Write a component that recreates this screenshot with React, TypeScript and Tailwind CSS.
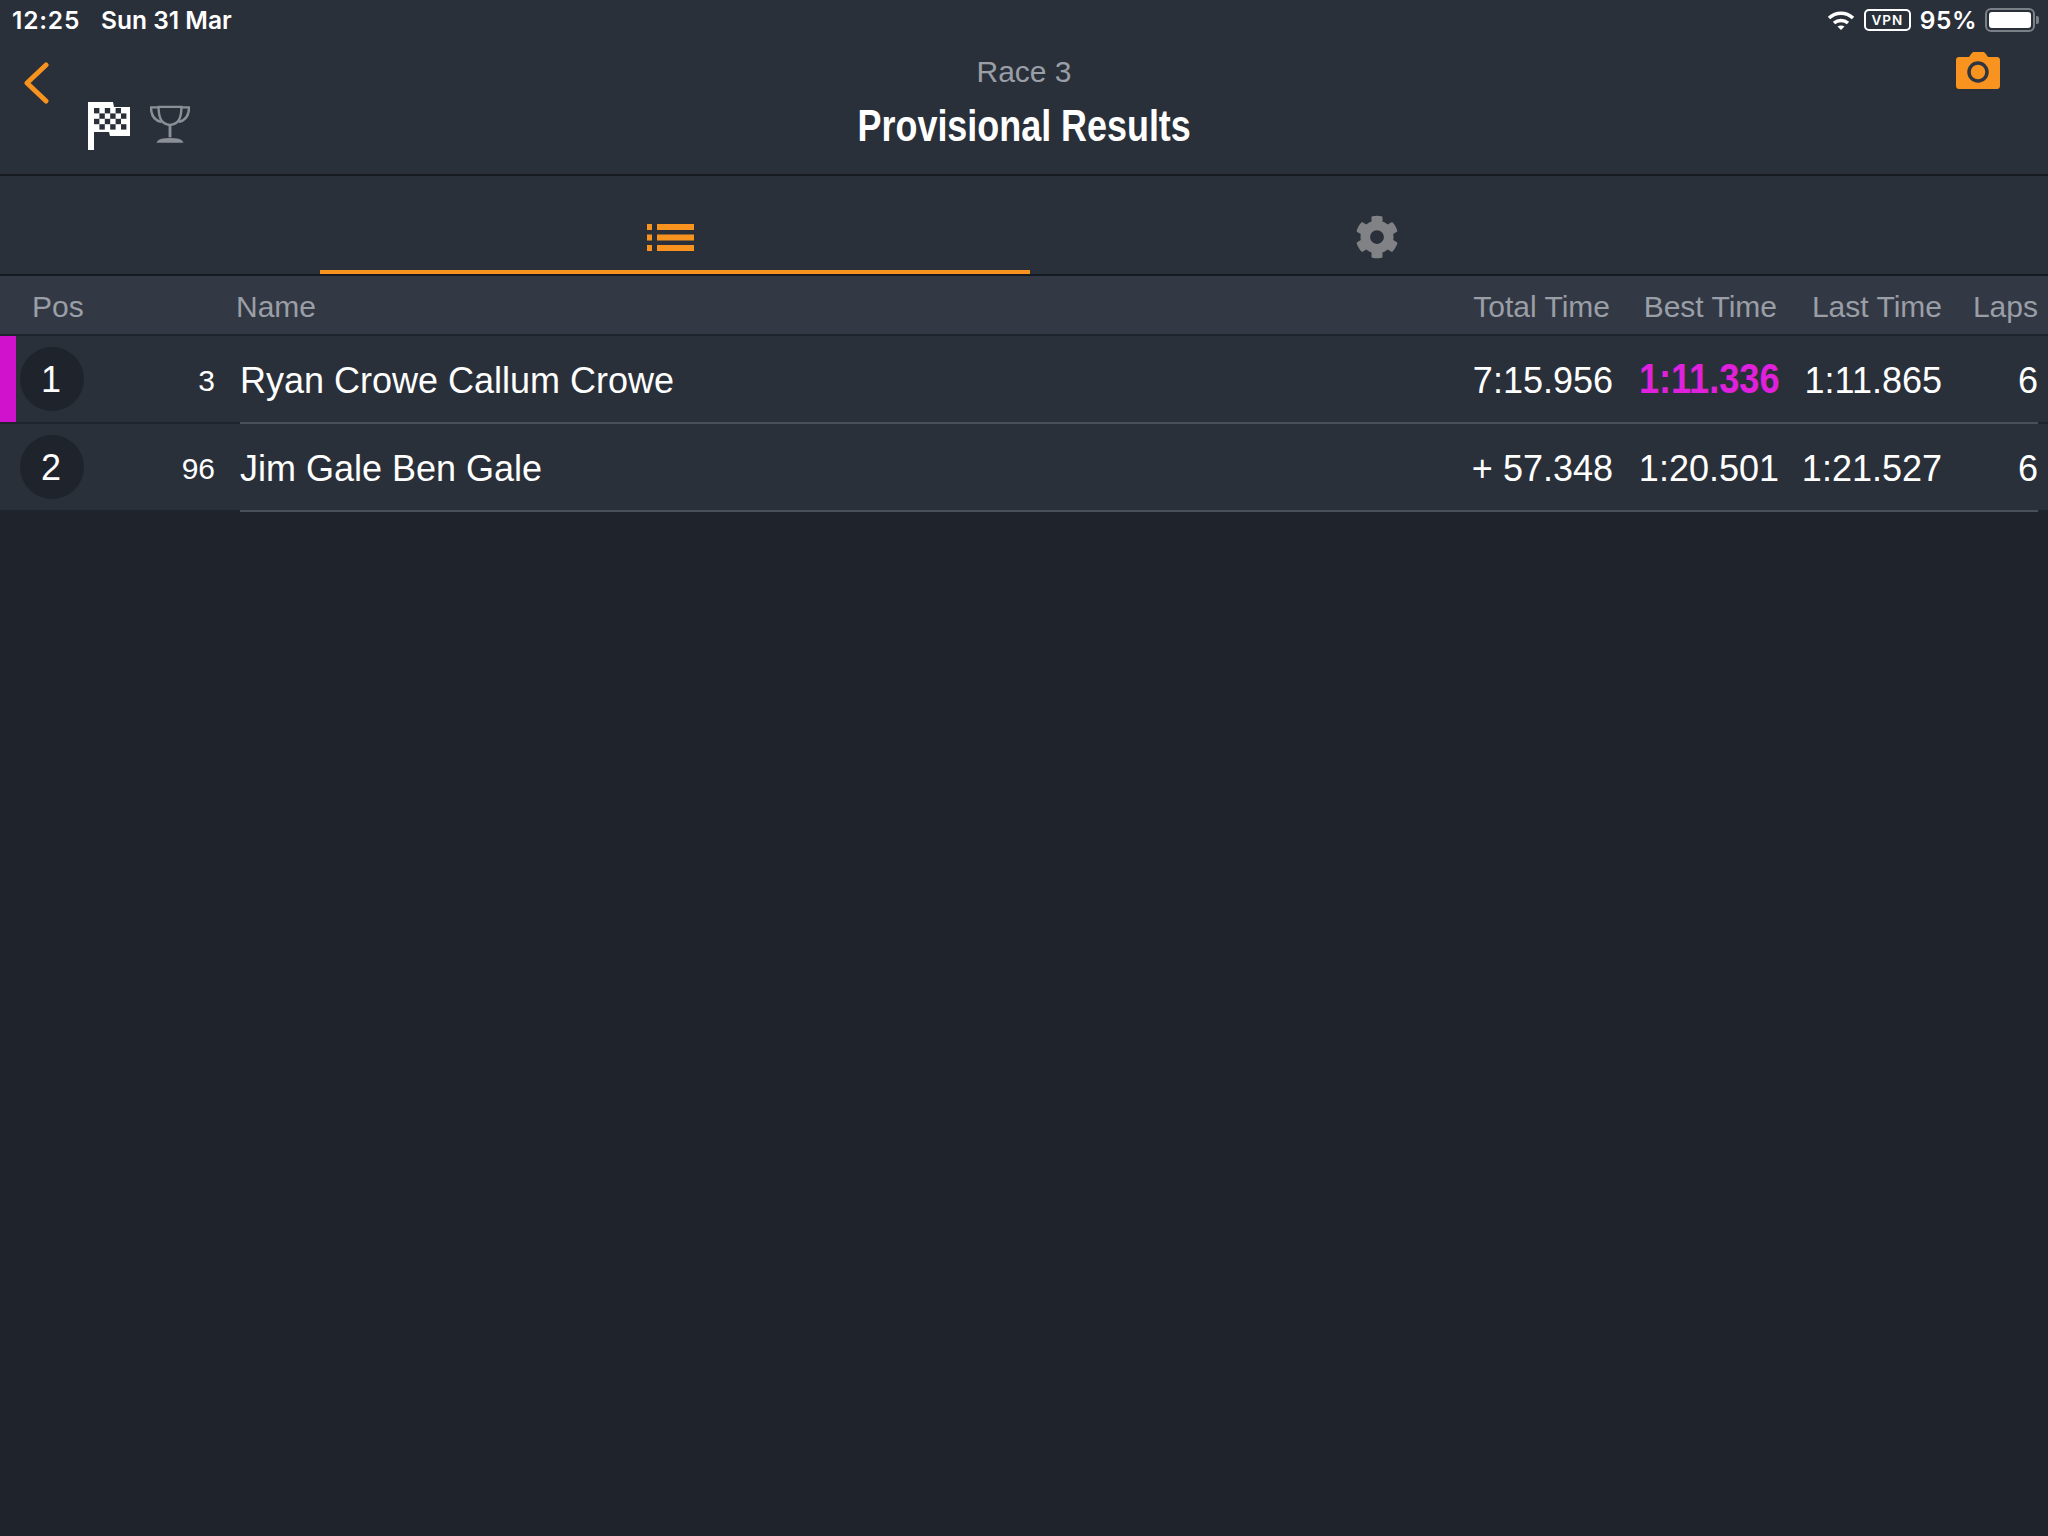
import { FaCog } from "react-icons/fa";

function Flag() {
  const cells: [number, number][] = [];
  for (let r = 0; r < 4; r++) for (let c = 0; c < 6; c++) if ((r + c) % 2 === 0) cells.push([c, r]);
  return (
    <svg width="44" height="48" viewBox="0 0 44 48" className="block">
      <path d="M0 0H25L26 5H42V34H22L21 30H6V48H0Z" fill="#ffffff" />
      {cells.map(([c, r]) => (
        <rect key={`${c}-${r}`} x={6 + c * 5.4} y={6 + r * 5.4} width="5.4" height="5.4" fill="#2a303a" />
      ))}
    </svg>
  );
}

function Trophy() {
  return (
    <svg width="40" height="40" viewBox="0 0 42 40" fill="none" stroke="#8b8f96" strokeWidth="2.500" className="block">
      <path d="M9 2H33C33 14 30 20 21 21C12 20 9 14 9 2Z" />
      <path d="M9 2.500H1C1 10 3 16 12 18" />
      <path d="M33 2.500H41C41 10 39 16 30 18" />
      <path d="M21 21V34" strokeWidth="3" />
      <path d="M9 38.500C11 35 31 35 33 38.500Z" fill="#8b8f96" />
    </svg>
  );
}

function Wifi() {
  return (
    <svg width="28" height="21" viewBox="0 0 28 21" fill="none" stroke="#ffffff" strokeWidth="3.500">
      <path d="M2 8C9 1.500 19 1.500 26 8" />
      <path d="M7 13C11 9.500 17 9.500 21 13" />
      <path d="M14 20L10.500 16.500C12.500 15 15.500 15 17.500 16.500Z" fill="#ffffff" stroke="none" />
    </svg>
  );
}

function Camera() {
  return (
    <svg width="44" height="37" viewBox="0 0 44 37" className="block">
      <path d="M3 5H13L15.500 1.500C16 .6 17 0 18 0H27C28 0 29 .6 29.500 1.500L32 5H41C42.700 5 44 6.300 44 8V34C44 35.700 42.700 37 41 37H3C1.300 37 0 35.700 0 34V8C0 6.300 1.300 5 3 5Z" fill="#f7931e" />
      <circle cx="22" cy="20" r="9" fill="none" stroke="#2f3540" strokeWidth="3.500" />
    </svg>
  );
}

function Battery() {
  return (
    <div className="flex items-center gap-[1px]">
      <div className="w-[50px] h-[24px] rounded-[6px] border-2 border-[#7b7f86] p-[2px]">
        <div className="w-full h-full rounded-[3px] bg-white" />
      </div>
      <div className="w-[3px] h-[8px] rounded-r-[2px] bg-[#7b7f86]" />
    </div>
  );
}

function Row({ pos, num, name, total, best, last, laps, fastest }: { pos: string; num: string; name: string; total: string; best: string; last: string; laps: string; fastest?: boolean }) {
  return (
    <div className="flex h-[88px] bg-[#2a303a] border-b-2 border-[#1f232c]">
      <div className={`w-[16px] shrink-0 ${fastest ? "bg-[#d012cd]" : ""}`} />
      <div className="w-[224px] shrink-0 flex items-center">
        <div className="w-[64px] h-[64px] ml-[4px] rounded-full bg-[#1f232c] flex items-center justify-center text-[36px] text-white pr-[2px] pt-[2px]">{pos}</div>
        <div className="flex-1 text-right text-[30px] text-white pr-[25px] pt-[2px]">{num}</div>
      </div>
      <div className="flex-1 mr-[10px] flex items-center border-b-2 -mb-[2px] border-[#4a4f58] text-[36px] text-white pt-[3px]">
        <div className="flex-1 whitespace-nowrap">{name}</div>
        <div className="w-[160px] text-right whitespace-nowrap pr-[1px]">{total}</div>
        <div className="w-[167px] text-right whitespace-nowrap pr-[2px]">
          {fastest ? (
            <span className="inline-block origin-right font-bold text-[#e020dc] text-[42px] leading-[40px] scale-x-[.86]">{best}</span>
          ) : (
            best
          )}
        </div>
        <div className="w-[161px] text-right whitespace-nowrap">{last}</div>
        <div className="w-[96px] text-right">{laps}</div>
      </div>
    </div>
  );
}

export default function App() {
  return (
    <div className="w-[2048px] h-[1536px] bg-[#1f232c] overflow-hidden font-['Liberation_Sans',sans-serif]">
      <div className="h-[176px] bg-[#2a303a] border-b-2 border-[#16191f] flex flex-col">
        <div className="h-[40px] flex items-center justify-between pl-[12px] pr-[9px] text-white font-['Inter',sans-serif] font-semibold text-[24.500px]">
          <div className="flex gap-[21px]">
            <span className="tracking-[.8px]">12:25</span>
            <span>Sun 31 Mar</span>
          </div>
          <div className="flex items-center">
            <Wifi />
            <div className="ml-[9px] w-[47px] h-[22px] rounded-[5px] border-2 border-white flex items-center justify-center text-[13.500px] font-semibold tracking-[1px]">VPN</div>
            <span className="ml-[9px] tracking-[.5px]">95%</span>
            <div className="ml-[8px]"><Battery /></div>
          </div>
        </div>
        <div className="flex-1 flex">
          <div className="w-[250px] pl-[23px] pt-[22px]">
            <svg width="26" height="42" viewBox="0 0 26 42" fill="none" stroke="#f7931e" strokeWidth="5" strokeLinecap="round" strokeLinejoin="round" className="block">
              <path d="M23 3L4 21L23 39" />
            </svg>
            <div className="flex items-start ml-[65px] -mt-[2px] gap-[18px]">
              <Flag />
              <div className="mt-[2px]"><Trophy /></div>
            </div>
          </div>
          <div className="flex-1 flex flex-col items-center pt-[15px]">
            <div className="text-[30px] leading-[34px] text-[#9a9ea6]">Race 3</div>
            <div className="mt-[12px] text-[44px] leading-[50px] font-bold text-white whitespace-nowrap scale-x-[.816]">Provisional Results</div>
          </div>
          <div className="w-[250px] flex justify-end pr-[48px] pt-[12px]">
            <Camera />
          </div>
        </div>
      </div>
      <div className="h-[100px] bg-[#2a303a] border-b-2 border-[#16191f] flex pl-[320px]">
        <div className="w-[710px] border-b-4 border-[#f7931e] flex items-center justify-center pt-[28px] pr-[10px]">
          <svg width="47" height="27" viewBox="0 0 47 27" className="block">
            <g fill="#f7931e">
              <rect x="0" y="0" width="5" height="6" />
              <rect x="10" y="0" width="37" height="6" />
              <rect x="0" y="10.500" width="5" height="6" />
              <rect x="10" y="10.500" width="37" height="6" />
              <rect x="0" y="21" width="5" height="6" />
              <rect x="10" y="21" width="37" height="6" />
            </g>
          </svg>
        </div>
        <div className="w-[710px] flex items-center justify-center pt-[24px] pr-[16px]">
          <FaCog size={44} color="#808285" />
        </div>
      </div>
      <div className="h-[60px] bg-[#333944] border-b-2 border-[#1f232c] flex items-center text-[30px] text-[#9a9ea6] pr-[10px] pt-[3px]">
        <div className="w-[236px] pl-[32px]">Pos</div>
        <div className="flex-1">Name</div>
        <div className="w-[160px] text-right pr-[4px] whitespace-nowrap">Total Time</div>
        <div className="w-[167px] text-right pr-[4px] whitespace-nowrap">Best Time</div>
        <div className="w-[161px] text-right whitespace-nowrap">Last Time</div>
        <div className="w-[96px] text-right">Laps</div>
      </div>
      <Row pos="1" num="3" name="Ryan Crowe Callum Crowe" total="7:15.956" best="1:11.336" last="1:11.865" laps="6" fastest />
      <Row pos="2" num="96" name="Jim Gale Ben Gale" total="+ 57.348" best="1:20.501" last="1:21.527" laps="6" />
    </div>
  );
}
